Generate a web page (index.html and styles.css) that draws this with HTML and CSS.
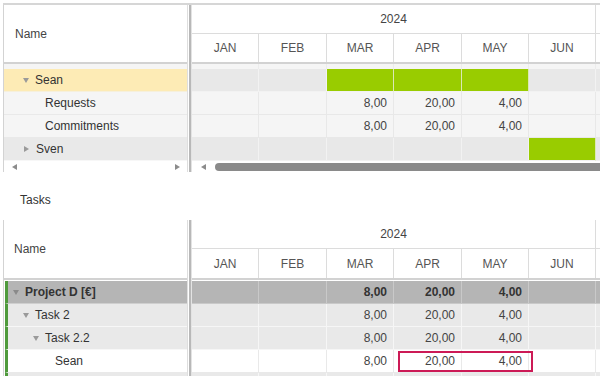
FILE: index.html
```html
<!DOCTYPE html>
<html>
<head>
<meta charset="utf-8">
<link rel="stylesheet" href="styles.css">
</head>
<body>
<div class="gantt gantt-top">
  <div class="left">
    <div class="lhead">Name</div>
    <div class="spacer"></div>
    <div class="nrow n-sel lvl1"><span class="tri down"></span>Sean</div>
    <div class="nrow n-light lvl2">Requests</div>
    <div class="nrow n-light lvl2">Commitments</div>
    <div class="nrow n-grey lvl1"><span class="tri rightp"></span>Sven</div>
    <div class="lscroll"><span class="arr arr-l"></span><span class="arr arr-r"></span></div>
  </div>
  <div class="splitter"></div>
  <div class="right">
    <div class="rhead">
      <div class="years"><div class="year">2024</div><div class="year"></div></div>
      <div class="cols months"><div>JAN</div><div>FEB</div><div>MAR</div><div>APR</div><div>MAY</div><div>JUN</div><div></div></div>
    </div>
    <div class="cols spacer-r"><div></div><div></div><div></div><div></div><div></div><div></div><div></div></div>
    <div class="cols crow c-grey"><div></div><div></div><div class="bar"></div><div class="bar"></div><div class="bar"></div><div></div><div></div></div>
    <div class="cols crow c-light"><div></div><div></div><div>8,00</div><div>20,00</div><div>4,00</div><div></div><div></div></div>
    <div class="cols crow c-light"><div></div><div></div><div>8,00</div><div>20,00</div><div>4,00</div><div></div><div></div></div>
    <div class="cols crow c-grey"><div></div><div></div><div></div><div></div><div></div><div class="bar"></div><div></div></div>
    <div class="rscroll"><span class="arr arr-l"></span><span class="thumb"></span></div>
  </div>
</div>

<div class="title">Tasks</div>

<div class="gantt gantt-bottom">
  <div class="left">
    <div class="lhead lhead-b">Name</div>
    <div class="gap"></div>
    <div class="nrow striped n-dark lvl0b"><span class="tri down"></span>Project D [€]</div>
    <div class="nrow striped n-grey lvl1b"><span class="tri down"></span>Task 2</div>
    <div class="nrow striped n-grey lvl2b"><span class="tri down"></span>Task 2.2</div>
    <div class="nrow striped n-white lvl3b">Sean</div>
    <div class="nrow striped n-grey"></div>
  </div>
  <div class="splitter"></div>
  <div class="right">
    <div class="rhead rhead-b">
      <div class="years"><div class="year">2024</div><div class="year"></div></div>
      <div class="cols months"><div>JAN</div><div>FEB</div><div>MAR</div><div>APR</div><div>MAY</div><div>JUN</div><div></div></div>
    </div>
    <div class="gap"></div>
    <div class="cols crow c-dark"><div></div><div></div><div>8,00</div><div>20,00</div><div>4,00</div><div></div><div></div></div>
    <div class="cols crow c-grey2"><div></div><div></div><div>8,00</div><div>20,00</div><div>4,00</div><div></div><div></div></div>
    <div class="cols crow c-grey2"><div></div><div></div><div>8,00</div><div>20,00</div><div>4,00</div><div></div><div></div></div>
    <div class="cols crow c-white"><div></div><div></div><div>8,00</div><div>20,00</div><div>4,00</div><div></div><div></div><span class="selbox"></span></div>
    <div class="cols crow c-grey2"><div></div><div></div><div></div><div></div><div></div><div></div><div></div></div>
  </div>
</div>
</body>
</html>
```

FILE: styles.css
```css
html, body {
  margin: 0;
  padding: 0;
}
body {
  width: 600px;
  height: 376px;
  overflow: hidden;
  background: #fff;
  font-family: "Liberation Sans", Arial, sans-serif;
  font-size: 12px;
  color: #333;
}

.gantt {
  display: flex;
  margin-left: 3px;
  overflow: hidden;
}
.gantt-top {
  margin-top: 3px;
  border-top: 2px solid #d6d6d6;
  height: 167px;
}
.gantt-bottom {
  height: 156px;
}

.left {
  width: 183px;
  flex: none;
  border-left: 1px solid #d3d3d3;
  border-right: 1px solid #dedede;
  display: flex;
  flex-direction: column;
}
.splitter {
  width: 4px;
  flex: none;
  background: linear-gradient(to right, #fff 0 1px, #b8b8b8 1px 3px, #e3e3e3 3px 4px);
}
.right {
  flex: 1;
  min-width: 0;
  overflow: hidden;
  display: flex;
  flex-direction: column;
}

/* headers */
.lhead {
  height: 57px;
  flex: none;
  border-bottom: 2px solid #d2d2d2;
  display: flex;
  align-items: center;
  padding-left: 11px;
  color: #444;
}
.lhead-b {
  height: 58px;
  padding-left: 10px;
}
.rhead {
  height: 57px;
  flex: none;
  border-bottom: 2px solid #d2d2d2;
  display: flex;
  flex-direction: column;
}
.rhead-b {
  height: 58px;
}
.years {
  display: grid;
  grid-template-columns: 404px 80px;
  height: 28px;
  border-bottom: 1px solid #dcdcdc;
  flex: none;
}
.year {
  border-right: 1px solid #dcdcdc;
  display: flex;
  align-items: center;
  justify-content: center;
  color: #444;
}
.cols {
  display: grid;
  grid-template-columns: 67px 68px 67px 68px 67px 67px 80px;
}
.months {
  flex: 1;
}
.months > div {
  border-right: 1px solid #dcdcdc;
  display: flex;
  align-items: center;
  justify-content: center;
  color: #555;
}

.spacer {
  height: 5px;
  flex: none;
  background: #f5f5f5;
}
.spacer-r {
  height: 5px;
  flex: none;
}
.spacer-r > div {
  background: #f5f5f5;
  border-right: 1px solid #ececec;
}
.gap {
  height: 1px;
  flex: none;
}

/* name rows */
.nrow {
  height: 22px;
  flex: none;
  line-height: 22px;
  border-bottom: 1px solid #ececec;
  white-space: nowrap;
  display: flex;
  align-items: center;
}
.n-sel { background: #fdebb5; border-bottom-color: #f6f0dc; }
.n-light { background: #f5f5f5; border-bottom-color: #e9e9e9; }
.n-grey { background: #e9e9e9; border-bottom-color: #f7f7f7; }
.n-dark { background: #b5b5b5; border-bottom-color: #cfcfcf; font-weight: bold; }
.n-white { background: #fff; border-bottom-color: #e9e9e9; }

.lvl1 { padding-left: 19px; }
.lvl2 { padding-left: 41px; }
.striped {
  margin-left: 1px;
  border-left: 3px solid #4f9a3c;
}
.lvl0b { padding-left: 5px; }
.lvl1b { padding-left: 15px; }
.lvl2b { padding-left: 25px; }
.lvl3b { padding-left: 47px; }

.tri {
  display: inline-block;
  width: 0;
  height: 0;
  margin-right: 6px;
}
.tri.down {
  border-left: 3.5px solid transparent;
  border-right: 3.5px solid transparent;
  border-top: 5px solid #9a9a9a;
}
.n-dark .tri.down { border-top-color: #8a8a8a; }
.tri.rightp {
  border-top: 3.5px solid transparent;
  border-bottom: 3.5px solid transparent;
  border-left: 5px solid #9a9a9a;
  margin-left: 1px;
  margin-right: 7px;
}

/* chart rows */
.crow {
  height: 23px;
  flex: none;
}
.crow > * {
  grid-row: 1;
}
.crow > :nth-child(1) { grid-column: 1; }
.crow > :nth-child(2) { grid-column: 2; }
.crow > :nth-child(3) { grid-column: 3; }
.crow > :nth-child(4) { grid-column: 4; }
.crow > :nth-child(5) { grid-column: 5; }
.crow > :nth-child(6) { grid-column: 6; }
.crow > :nth-child(7) { grid-column: 7; }
.crow > div {
  border-bottom: 1px solid #ececec;
  border-right: 1px solid #ececec;
  text-align: right;
  padding-right: 6px;
  line-height: 22px;
  color: #444;
}
.c-grey > div { background: #e8e8e8; border-color: #f2f2f2; }
.c-light > div { background: #f5f5f5; border-color: #e8e8e8; }
.c-dark > div { background: #b5b5b5; border-color: #c9c9c9; font-weight: bold; color: #333; }
.c-grey2 > div { background: #e9e9e9; border-color: #f6f6f6; }
.c-white > div { background: #fff; border-color: #e9e9e9; }
.crow > div.bar {
  background: #99cc00;
  border-right-color: #dbe8b5;
}

.crow > .selbox {
  grid-column: 4 / 6;
  grid-row: 1;
  margin: 1px -4px 1px 4px;
  border: 2px solid #cc1a56;
  pointer-events: none;
}

/* scroll rows */
.lscroll {
  height: 11px;
  flex: none;
  display: flex;
  align-items: center;
  justify-content: space-between;
  padding: 0 7px 0 8px;
  background: #fff;
}
.rscroll {
  height: 11px;
  flex: none;
  display: flex;
  align-items: center;
  padding-left: 9px;
}
.arr {
  display: inline-block;
  width: 0;
  height: 0;
  border-top: 3.5px solid transparent;
  border-bottom: 3.5px solid transparent;
}
.arr-l { border-right: 5px solid #8c8c8c; }
.arr-r { border-left: 5px solid #8c8c8c; }
.thumb {
  flex: 1;
  height: 8px;
  margin-left: 9px;
  border-radius: 4px 0 0 4px;
  background: #8a8a8a;
}

.title {
  height: 48px;
  box-sizing: border-box;
  padding: 20px 0 0 20px;
  line-height: 16px;
  font-size: 12px;
  color: #333;
}
```
